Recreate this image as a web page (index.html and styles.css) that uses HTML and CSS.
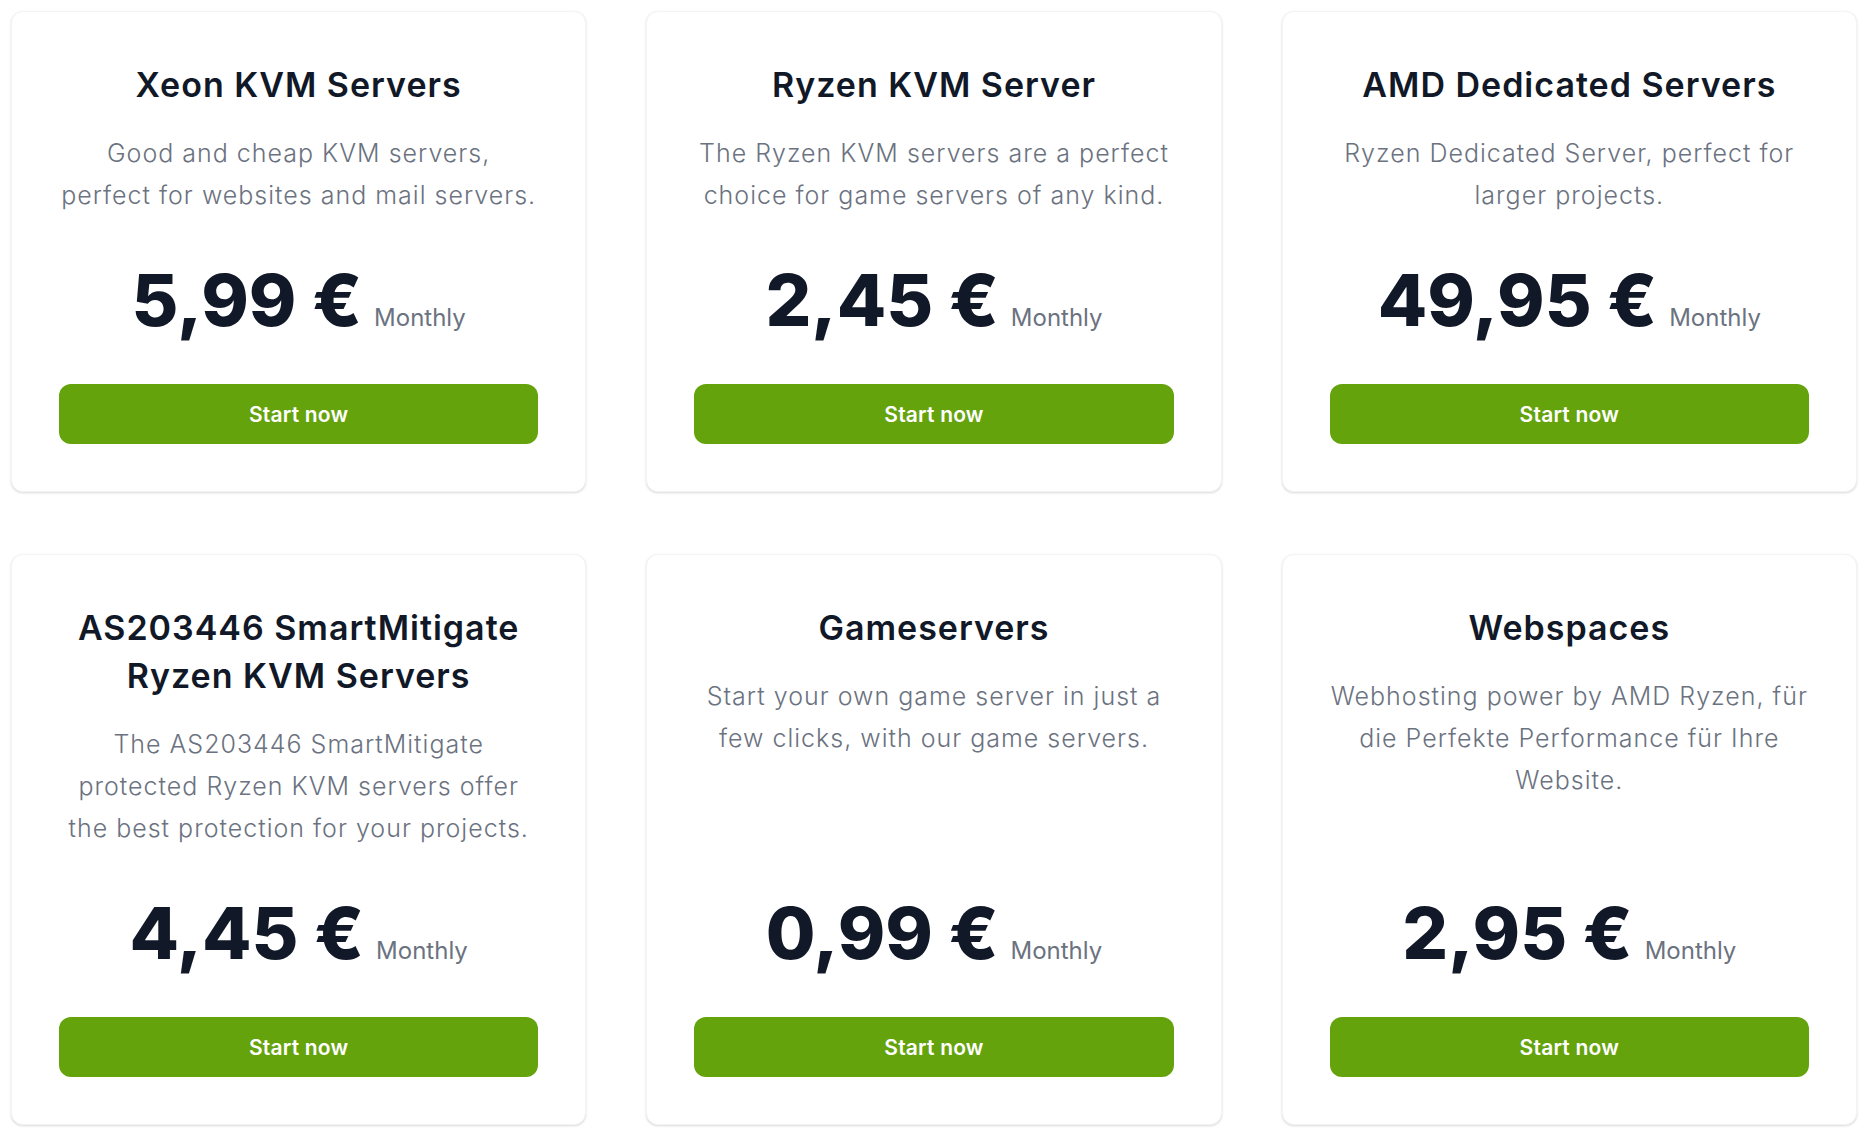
FILE: index.html
```html
<!DOCTYPE html>
<html lang="en">
<head>
    <meta charset="UTF-8">
    <meta name="viewport" content="width=device-width, initial-scale=1.0">
    <title>Products</title>
    <link rel="stylesheet" href="styles.css">
</head>
<body>
    <div class="products">
        <!-- Row 1 -->
        <div class="card">
            <h2>Xeon KVM Servers</h2>
            <p class="desc">Good and cheap KVM servers, perfect for websites and mail servers.</p>
            <div class="price">5,99 €<span class="period">Monthly</span></div>
            <a class="btn" href="#">Start now</a>
        </div>

        <div class="card">
            <h2>Ryzen KVM Server</h2>
            <p class="desc">The Ryzen KVM servers are a perfect choice for game servers of any kind.</p>
            <div class="price">2,45 €<span class="period">Monthly</span></div>
            <a class="btn" href="#">Start now</a>
        </div>

        <div class="card">
            <h2>AMD Dedicated Servers</h2>
            <p class="desc">Ryzen Dedicated Server, perfect for larger projects.</p>
            <div class="price">49,95 €<span class="period">Monthly</span></div>
            <a class="btn" href="#">Start now</a>
        </div>

        <!-- Row 2 -->
        <div class="card">
            <h2>AS203446 SmartMitigate Ryzen KVM Servers</h2>
            <p class="desc">The AS203446 SmartMitigate protected Ryzen KVM servers offer the best protection for your projects.</p>
            <div class="price">4,45 €<span class="period">Monthly</span></div>
            <a class="btn" href="#">Start now</a>
        </div>

        <div class="card">
            <h2>Gameservers</h2>
            <p class="desc">Start your own game server in just a few clicks, with our game servers.</p>
            <div class="price">0,99 €<span class="period">Monthly</span></div>
            <a class="btn" href="#">Start now</a>
        </div>

        <div class="card">
            <h2>Webspaces</h2>
            <p class="desc">Webhosting power by AMD Ryzen, für die Perfekte Performance für Ihre Website.</p>
            <div class="price">2,95 €<span class="period">Monthly</span></div>
            <a class="btn" href="#">Start now</a>
        </div>
    </div>
</body>
</html>
```

FILE: styles.css
```css
* {
    box-sizing: border-box;
    margin: 0;
    padding: 0;
}

body {
    background-color: white;
    font-family: Inter, "Noto Sans", sans-serif;
    color: #111827;
}

.products {
    display: grid;
    grid-template-columns: repeat(3, 1fr);
    column-gap: 60px;
    row-gap: 62px;
    padding: 11px 9px 11px 11px;
}

.card {
    display: flex;
    flex-direction: column;
    padding: 49px 47px 47px;
    text-align: center;
    background-color: white;
    border: 1px solid #f3f4f6;
    border-radius: 12px;
    box-shadow: 0px 1px 3px rgba(0, 0, 0, 0.1), 0px 1px 2px rgba(0, 0, 0, 0.06);
}

.card h2 {
    font-size: 34px;
    line-height: 48px;
    font-weight: 600;
    letter-spacing: 1px;
    color: #111827;
}

.desc {
    margin-top: 23px;
    margin-bottom: 48px;
    font-size: 25px;
    line-height: 42px;
    font-weight: 300;
    letter-spacing: 1px;
    color: #6b7280;
}

.price {
    margin-top: auto;
    font-size: 72px;
    line-height: 72px;
    font-weight: 800;
    color: #111827;
}

.period {
    margin-left: 12px;
    font-size: 24px;
    font-weight: 400;
    color: #6b7280;
}

.btn {
    display: flex;
    align-items: center;
    justify-content: center;
    height: 60px;
    margin-top: 30px;
    border-radius: 12px;
    background-color: #65a30d;
    color: white;
    font-size: 21px;
    font-weight: 600;
    letter-spacing: 0.2px;
    text-decoration: none;
}

.btn:hover {
    background-color: #4d7c0f;
}
```
